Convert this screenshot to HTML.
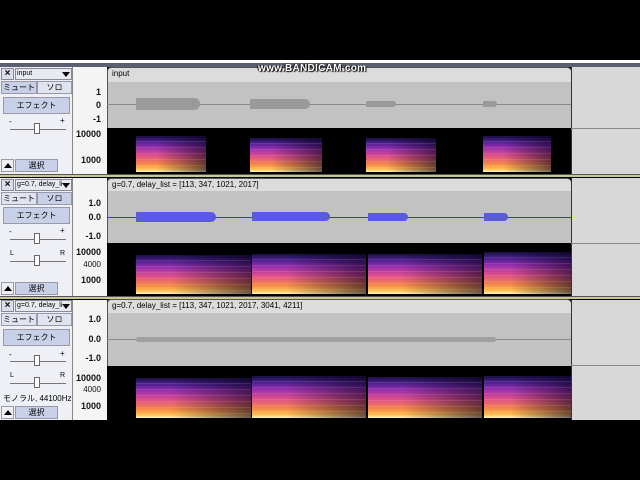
<!DOCTYPE html>
<html><head><meta charset="utf-8"><style>
*{margin:0;padding:0;box-sizing:border-box}
body{width:640px;height:480px;background:#000;position:relative;overflow:hidden;font-family:"Liberation Sans","Noto Sans CJK JP",sans-serif}
.a{position:absolute}
.ctl{background:#eef0f6;border-right:1px solid #888;left:0;width:73px}
.xb{left:1px;width:13px;height:12px;border:1px solid #889;background:#dde;font-size:10px;line-height:10px;text-align:center;font-weight:bold}
.nm{left:15px;width:57px;height:12px;border:1px solid #889;background:#e8eaf2;font-size:7px;line-height:10px;padding-left:1px;white-space:nowrap;overflow:hidden}
.tri{width:0;height:0;border-left:4px solid transparent;border-right:4px solid transparent;border-top:5px solid #000}
.btn{background:#c8d0e8;border:1px solid #99a;font-size:8px;text-align:center}
.rul{left:73px;width:34px;background:#f4f4f4;font-size:9px;text-align:right;font-weight:bold;color:#111}
.rul span{position:absolute;right:6px}
.hd{background:#dcdcdc;font-size:8px;padding-left:4px;line-height:12px;border-left:1px solid #555;border-top:1px solid #555;border-radius:4px 4px 0 0}
.wv{background:#c2c2c2;border-left:1px solid #555}
.sp{background:#000}
.seg{position:absolute;background:
 repeating-linear-gradient(to bottom,rgba(0,0,0,0) 0,rgba(0,0,0,0) 5px,rgba(255,220,200,.12) 5px,rgba(255,220,200,.12) 6px),
 linear-gradient(to right,rgba(0,0,0,0) 0,rgba(0,0,0,0) 30%,rgba(10,0,30,.6) 100%),
 linear-gradient(to top,#fff6c8 0%,#ffc050 8%,#f58a48 22%,#e0508a 45%,#9a30b0 68%,#4a2090 85%,#1a1040 100%)}
.side{left:571px;width:69px;background:#d8d8d8;border-left:1px solid #333}
.sep{left:0;width:640px;height:3px;background:#c8c890;border-top:1px solid #555}
.sl{height:1px;background:#777}
.gb{position:absolute;background:#9a9a9a;border-radius:2px 12px 12px 2px}
.bb{position:absolute;background:#5a5ae0;border-radius:2px 12px 12px 2px}
</style></head><body>
<div class="a" style="left:0;top:60px;width:640px;height:3px;background:#fff"></div>
<div class="a" style="left:0;top:63px;width:640px;height:4px;background:#5a6070"></div>

<!-- TRACK 1 -->
<div class="a ctl" style="top:67px;height:107px"></div>
<div class="a xb" style="top:68px">×</div>
<div class="a nm" style="top:68px">input</div>
<div class="a tri" style="left:62px;top:72px"></div>
<div class="a btn" style="left:1px;top:81px;width:36px;height:13px">ミュート</div>
<div class="a btn" style="left:37px;top:81px;width:35px;height:13px;background:#e0e4f0">ソロ</div>
<div class="a btn" style="left:3px;top:97px;width:67px;height:17px;line-height:15px">エフェクト</div>
<div class="a" style="left:9px;top:117px;font-size:8px">-</div><div class="a" style="left:60px;top:116px;font-size:8px">+</div>
<div class="a sl" style="left:10px;top:129px;width:56px"></div>
<div class="a" style="left:34px;top:123px;width:6px;height:11px;background:#fff;border:1px solid #666"></div>
<div class="a btn" style="left:1px;top:159px;width:13px;height:13px;background:#eef0f6"><div class="a" style="left:2px;top:3px;border-left:4px solid transparent;border-right:4px solid transparent;border-bottom:5px solid #000"></div></div>
<div class="a btn" style="left:15px;top:159px;width:43px;height:13px">選択</div>
<div class="a rul" style="top:67px;height:107px"><span style="top:20px">1</span><span style="top:33px">0</span><span style="top:47px">-1</span><span style="top:62px">10000</span><span style="top:88px">1000</span></div>
<div class="a hd" style="left:107px;top:67px;width:464px;height:15px">input</div>
<div class="a wv" style="left:107px;top:82px;width:464px;height:46px"></div>
<div class="a" style="left:107px;top:104px;width:464px;height:1px;background:#888"></div>
<div class="gb" style="left:136px;top:98px;width:64px;height:12px"></div>
<div class="gb" style="left:250px;top:99px;width:60px;height:10px"></div>
<div class="gb" style="left:366px;top:101px;width:30px;height:6px"></div>
<div class="gb" style="left:483px;top:101px;width:14px;height:6px"></div>
<div class="a sp" style="left:107px;top:128px;width:464px;height:46px"></div>
<div class="a seg" style="left:136px;top:136px;width:70px;height:36px"></div>
<div class="a seg" style="left:250px;top:138px;width:72px;height:34px"></div>
<div class="a seg" style="left:366px;top:138px;width:70px;height:34px"></div>
<div class="a seg" style="left:483px;top:136px;width:68px;height:36px"></div>
<div class="a side" style="top:67px;height:107px"></div>
<div class="a" style="left:571px;top:128px;width:69px;height:1px;background:#888"></div>
<div class="a sep" style="top:174px"></div>

<!-- TRACK 2 -->
<div class="a ctl" style="top:178px;height:118px"></div>
<div class="a xb" style="top:179px">×</div>
<div class="a nm" style="top:179px">g=0.7, delay_li</div>
<div class="a tri" style="left:62px;top:183px"></div>
<div class="a btn" style="left:1px;top:192px;width:36px;height:13px;background:#e0e4f0">ミュート</div>
<div class="a btn" style="left:37px;top:192px;width:35px;height:13px">ソロ</div>
<div class="a btn" style="left:3px;top:207px;width:67px;height:17px;line-height:15px">エフェクト</div>
<div class="a" style="left:9px;top:227px;font-size:8px">-</div><div class="a" style="left:60px;top:226px;font-size:8px">+</div>
<div class="a sl" style="left:10px;top:239px;width:56px"></div>
<div class="a" style="left:34px;top:233px;width:6px;height:11px;background:#fff;border:1px solid #666"></div>
<div class="a" style="left:10px;top:250px;font-size:7px">L</div><div class="a" style="left:60px;top:250px;font-size:7px">R</div>
<div class="a sl" style="left:10px;top:261px;width:56px"></div>
<div class="a" style="left:34px;top:255px;width:6px;height:11px;background:#fff;border:1px solid #666"></div>
<div class="a btn" style="left:1px;top:282px;width:13px;height:13px;background:#eef0f6"><div class="a" style="left:2px;top:3px;border-left:4px solid transparent;border-right:4px solid transparent;border-bottom:5px solid #000"></div></div>
<div class="a btn" style="left:15px;top:282px;width:43px;height:13px">選択</div>
<div class="a rul" style="top:178px;height:118px"><span style="top:20px">1.0</span><span style="top:34px">0.0</span><span style="top:53px">-1.0</span><span style="top:69px">10000</span><span style="top:82px;font-weight:normal;font-size:8px">4000</span><span style="top:97px">1000</span></div>
<div class="a hd" style="left:107px;top:178px;width:464px;height:13px">g=0.7, delay_list = [113, 347, 1021, 2017]</div>
<div class="a wv" style="left:107px;top:191px;width:464px;height:52px"></div>
<div class="a" style="left:107px;top:217px;width:464px;height:1px;background:#3a3ad0"></div>
<div class="bb" style="left:136px;top:212px;width:80px;height:10px"></div>
<div class="bb" style="left:252px;top:212px;width:78px;height:9px"></div>
<div class="bb" style="left:368px;top:213px;width:40px;height:8px"></div>
<div class="bb" style="left:484px;top:213px;width:24px;height:8px"></div>
<div class="a sp" style="left:107px;top:243px;width:464px;height:53px"></div>
<div class="a seg" style="left:136px;top:255px;width:115px;height:39px"></div>
<div class="a seg" style="left:252px;top:254px;width:114px;height:40px"></div>
<div class="a seg" style="left:368px;top:254px;width:114px;height:40px"></div>
<div class="a seg" style="left:484px;top:252px;width:87px;height:42px"></div>
<div class="a side" style="top:178px;height:118px"></div>
<div class="a" style="left:571px;top:243px;width:69px;height:1px;background:#888"></div>
<div class="a sep" style="top:296px"></div>

<!-- TRACK 3 -->
<div class="a ctl" style="top:300px;height:120px"></div>
<div class="a xb" style="top:300px">×</div>
<div class="a nm" style="top:300px">g=0.7, delay_li</div>
<div class="a tri" style="left:62px;top:304px"></div>
<div class="a btn" style="left:1px;top:313px;width:36px;height:13px;background:#e0e4f0">ミュート</div>
<div class="a btn" style="left:37px;top:313px;width:35px;height:13px;background:#e0e4f0">ソロ</div>
<div class="a btn" style="left:3px;top:329px;width:67px;height:17px;line-height:15px">エフェクト</div>
<div class="a" style="left:9px;top:350px;font-size:8px">-</div><div class="a" style="left:60px;top:349px;font-size:8px">+</div>
<div class="a sl" style="left:10px;top:361px;width:56px"></div>
<div class="a" style="left:34px;top:355px;width:6px;height:11px;background:#fff;border:1px solid #666"></div>
<div class="a" style="left:10px;top:372px;font-size:7px">L</div><div class="a" style="left:60px;top:372px;font-size:7px">R</div>
<div class="a sl" style="left:10px;top:383px;width:56px"></div>
<div class="a" style="left:34px;top:377px;width:6px;height:11px;background:#fff;border:1px solid #666"></div>
<div class="a" style="left:3px;top:393px;font-size:8px;white-space:nowrap">モノラル, 44100Hz</div>
<div class="a btn" style="left:1px;top:406px;width:13px;height:13px;background:#eef0f6"><div class="a" style="left:2px;top:3px;border-left:4px solid transparent;border-right:4px solid transparent;border-bottom:5px solid #000"></div></div>
<div class="a btn" style="left:15px;top:406px;width:43px;height:13px">選択</div>
<div class="a rul" style="top:300px;height:120px"><span style="top:14px">1.0</span><span style="top:34px">0.0</span><span style="top:53px">-1.0</span><span style="top:73px">10000</span><span style="top:85px;font-weight:normal;font-size:8px">4000</span><span style="top:101px">1000</span></div>
<div class="a hd" style="left:107px;top:299px;width:464px;height:14px">g=0.7, delay_list = [113, 347, 1021, 2017, 3041, 4211]</div>
<div class="a wv" style="left:107px;top:313px;width:464px;height:53px"></div>
<div class="a" style="left:107px;top:339px;width:464px;height:1px;background:#888"></div>
<div class="a" style="left:136px;top:337px;width:360px;height:5px;background:#a0a0a0;border-radius:3px"></div>
<div class="a sp" style="left:107px;top:366px;width:464px;height:54px"></div>
<div class="a seg" style="left:136px;top:378px;width:115px;height:40px"></div>
<div class="a seg" style="left:252px;top:376px;width:114px;height:42px"></div>
<div class="a seg" style="left:368px;top:377px;width:114px;height:41px"></div>
<div class="a seg" style="left:484px;top:376px;width:87px;height:42px"></div>
<div class="a side" style="top:300px;height:120px"></div>
<div class="a" style="left:571px;top:365px;width:69px;height:1px;background:#888"></div>

<div class="a" style="left:258px;top:63px;font-size:10px;line-height:12px;color:#fff;font-weight:bold;text-shadow:1px 1px 1px #000,-1px 0 1px #000;letter-spacing:.3px;z-index:10">www.BANDICAM.com</div>
</body></html>
